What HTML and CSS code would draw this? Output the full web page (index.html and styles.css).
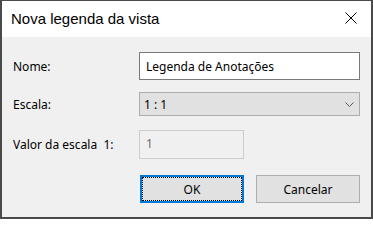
FILE: index.html
```html
<!DOCTYPE html>
<html lang="pt">
<head>
<meta charset="utf-8">
<title>Nova legenda da vista</title>
<link rel="stylesheet" href="styles.css">
</head>
<body>
<div class="window">
  <div class="titlebar">
    <span class="title">Nova legenda da vista</span>
    <svg class="close" width="12" height="12" viewBox="0 0 12 12" aria-hidden="true">
      <path d="M0.5 0.5 L11.5 11.5 M11.5 0.5 L0.5 11.5" stroke="#000" stroke-width="1" fill="none"/>
    </svg>
  </div>
  <div class="content">
    <div class="row row-name">
      <span class="label">Nome:</span>
      <div class="field">Legenda de Anotações</div>
    </div>
    <div class="row row-scale">
      <span class="label">Escala:</span>
      <div class="combo">
        <span class="combo-text">1 : 1</span>
        <svg class="chevron" width="9" height="5" viewBox="0 0 9 5" aria-hidden="true">
          <path d="M0.5 0.5 L4.5 4.5 L8.5 0.5" stroke="#5a5a5a" stroke-width="1" fill="none"/>
        </svg>
      </div>
    </div>
    <div class="row row-value">
      <span class="label label-pre">Valor da escala  1:</span>
      <div class="field field-disabled">1</div>
    </div>
    <div class="buttons">
      <div class="btn btn-default">OK</div>
      <div class="btn">Cancelar</div>
    </div>
  </div>
</div>
</body>
</html>
```
FILE: styles.css
```css
html, body {
  margin: 0;
  padding: 0;
}
body {
  font-family: "Noto Sans", "Open Sans", sans-serif;
  font-size: 12px;
  color: #000;
}
.window {
  box-sizing: border-box;
  width: 373px;
  height: 219px;
  border: 2px solid #4a4a4a;
  border-top-width: 1px;
  background: #f0f0f0;
  display: flex;
  flex-direction: column;
}
.titlebar {
  height: 36px;
  background: #fff;
  display: flex;
  align-items: center;
  justify-content: space-between;
  padding: 0 14px 0 9px;
}
.title {
  font-family: "Liberation Sans", Arial, sans-serif;
  font-size: 15px;
  line-height: 1;
  margin-top: -2px;
}
.close {
  display: block;
  margin-top: -2px;
}
.content {
  padding: 15px 11px 0 11px;
  display: flex;
  flex-direction: column;
}
.row {
  display: flex;
  align-items: center;
}
.label {
  width: 126px;
  flex: none;
}
.label-pre {
  white-space: pre;
}
.row-scale {
  margin-top: 12px;
}
.row-value {
  margin-top: 14px;
}
.field {
  box-sizing: border-box;
  width: 221px;
  height: 28px;
  border: 1px solid #7a7a7a;
  background: #fff;
  padding-left: 6px;
  display: flex;
  align-items: center;
}
.field-disabled {
  width: 105px;
  height: 29px;
  border-color: #cccccc;
  background: #f0f0f0;
  color: #6d6d6d;
  padding-left: 6px;
  align-items: flex-start;
  padding-top: 4px;
}
.combo {
  box-sizing: border-box;
  width: 221px;
  height: 24px;
  border: 1px solid #adadad;
  background: #e1e1e1;
  padding: 0 5px 0 4px;
  display: flex;
  align-items: center;
  justify-content: space-between;
}
.chevron {
  display: block;
}
.buttons {
  margin-top: 16px;
  display: flex;
  justify-content: flex-end;
  gap: 12px;
}
.btn {
  box-sizing: border-box;
  width: 104px;
  height: 28px;
  border: 1px solid #adadad;
  background: #e1e1e1;
  display: flex;
  align-items: center;
  justify-content: center;
}
.btn-default {
  border: 2px solid #0078d7;
  outline: 1px dotted #000;
  outline-offset: -3px;
}
```
